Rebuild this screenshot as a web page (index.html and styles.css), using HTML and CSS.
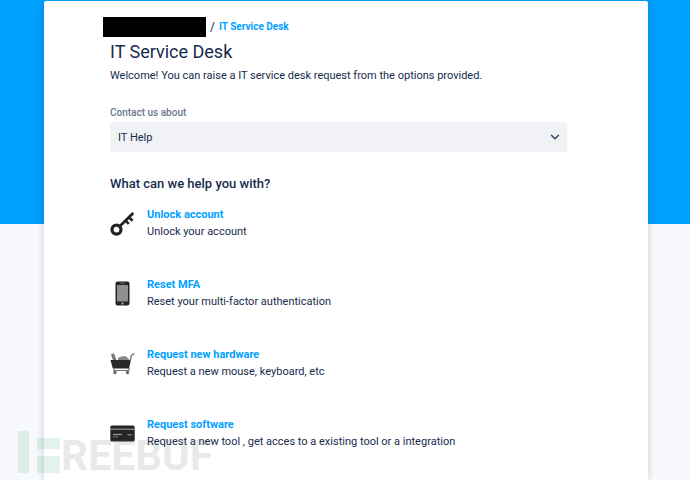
FILE: index.html
```
<!DOCTYPE html>
<html lang="en">
<head>
    <meta charset="UTF-8">
    <meta name="viewport" content="width=device-width, initial-scale=1.0">
    <title>IT Service Desk</title>
    <link rel="stylesheet" href="styles.css">
</head>
<body>
    <main class="card">
        <nav class="breadcrumb">
            <span class="redacted"></span>
            <span class="separator">/</span>
            <a href="#">IT Service Desk</a>
        </nav>
        <h1>IT Service Desk</h1>
        <p class="intro">Welcome! You can raise a IT service desk request from the options provided.</p>

        <form>
            <label for="contact">Contact us about</label>
            <div class="select-box">
                <select name="contact" id="contact">
                    <option>IT Help</option>
                </select>
                <svg class="arrow" width="10" height="6" viewBox="0 0 10 6">
                    <path d="M1.2 1L5 4.7L8.8 1" fill="none" stroke="#344563" stroke-width="1.6"/>
                </svg>
            </div>
        </form>

        <h2>What can we help you with?</h2>
        <ul class="requests">
            <li>
                <svg class="icon" width="25" height="25" viewBox="0 0 25 25">
                    <circle cx="6.5" cy="18.6" r="4.5" fill="none" stroke="#222" stroke-width="3.2"/>
                    <path d="M9.5 15.5L22.5 2.8" fill="none" stroke="#222" stroke-width="2.8" stroke-linecap="round"/>
                    <path d="M15.8 9.8l3 3M19 6.5l3.6 3.2" fill="none" stroke="#222" stroke-width="2.6"/>
                </svg>
                <div>
                    <a href="#">Unlock account</a>
                    <p>Unlock your account</p>
                </div>
            </li>
            <li>
                <svg class="icon" width="25" height="25" viewBox="0 0 25 25">
                    <rect x="5.5" y="0.5" width="14" height="24" rx="2" fill="#252525"/>
                    <rect x="7" y="4" width="11" height="16.5" fill="#8e8e8e"/>
                    <path d="M10.5 2.2h4" stroke="#888" stroke-width="0.8"/>
                    <rect x="11.5" y="21.5" width="2" height="2" rx="0.5" fill="#aaa"/>
                </svg>
                <div>
                    <a href="#">Reset MFA</a>
                    <p>Reset your multi-factor authentication</p>
                </div>
            </li>
            <li>
                <svg class="icon" width="25" height="25" viewBox="0 0 25 25">
                    <path d="M1 3.5l3-1.2l2.5 7H3z" fill="#777"/>
                    <path d="M8 9V6.8L12 5.2h4l3 3V10H8z" fill="#888"/>
                    <path d="M0.5 9h20.5l-2 8.5H2.8z" fill="#282828"/>
                    <path d="M20 10l1.5-5.5q0.6-1.4 3-1.5" fill="none" stroke="#777" stroke-width="1.4"/>
                    <path d="M4 17v2.5h15V17" fill="none" stroke="#777" stroke-width="1.2"/>
                    <circle cx="5" cy="21.5" r="1.7" fill="#666"/>
                    <circle cx="17.5" cy="21.5" r="1.7" fill="#666"/>
                </svg>
                <div>
                    <a href="#">Request new hardware</a>
                    <p>Request a new mouse, keyboard, etc</p>
                </div>
            </li>
            <li>
                <svg class="icon" width="25" height="25" viewBox="0 0 25 25">
                    <rect x="0.3" y="4.5" width="24.4" height="16" rx="1.5" fill="#252525"/>
                    <path d="M0.3 8.2h24.4" stroke="#aaa" stroke-width="1"/>
                    <path d="M3 13.5h9" stroke="#999" stroke-width="1.2"/>
                    <path d="M3 15.8h5" stroke="#777" stroke-width="1"/>
                    <path d="M17.5 13.8h4" stroke="#888" stroke-width="1.4"/>
                </svg>
                <div>
                    <a href="#">Request software</a>
                    <p>Request a new tool , get acces to a existing tool or a integration</p>
                </div>
            </li>
        </ul>
    </main>

    <div class="watermark">
        <svg width="42" height="42" viewBox="0 0 42 42">
            <path d="M0 0h11v42H0zM19 7h23v11H19zM19 25h23v17H19z" fill="#22a06b"/>
        </svg>
        <span>REEBUF</span>
    </div>
</body>
</html>
```

FILE: styles.css
```
* {
    box-sizing: border-box;
}
body {
    font-family: Roboto, "Liberation Sans", sans-serif;
    font-size: 11px;
    line-height: 16px;
    margin: 0;
    color: #172b4d;
    background: linear-gradient(#00a0ff 224px, #f8f9fc 224px);
    min-height: 100vh;
    display: flex;
}
a {
    color: #00a0ff;
    font-weight: 700;
    text-decoration: none;
}
a:hover {
    text-decoration: underline;
}
h1, h2, p {
    margin: 0;
}
.card {
    flex: 1;
    margin: 1px 42px 0 44px;
    padding: 15px 81px 0 66px;
    background-color: white;
    border-radius: 2px 2px 0 0;
    box-shadow: 0 0 8px rgba(9, 30, 66, 0.2);
}
.breadcrumb {
    display: flex;
    align-items: center;
    gap: 4px;
    margin-left: -7px;
    font-size: 10px;
    line-height: 22px;
}
.redacted {
    width: 103px;
    height: 20px;
    background-color: black;
}
.separator {
    font-size: 12px;
}
h1 {
    margin-top: 2px;
    font-size: 18px;
    line-height: 24px;
    font-weight: 400;
}
.intro {
    margin-top: 4px;
}
label {
    display: block;
    margin-top: 21px;
    font-size: 10px;
    font-weight: 500;
    color: #6b778c;
}
.select-box {
    position: relative;
    margin-top: 1px;
}
select {
    appearance: none;
    display: block;
    width: 100%;
    height: 30px;
    padding: 1px 8px 0;
    border: none;
    border-radius: 3px;
    background-color: #f1f2f6;
    color: inherit;
    font: inherit;
}
.arrow {
    position: absolute;
    right: 7px;
    top: 12px;
    pointer-events: none;
}
h2 {
    margin-top: 24px;
    font-size: 13px;
    font-weight: 500;
}
.requests {
    list-style: none;
    margin: 15px 0 0;
    padding: 0;
    display: grid;
    gap: 37px;
}
.requests li {
    display: flex;
    align-items: center;
    gap: 12px;
}
.requests p {
    margin-top: 1px;
}
.requests a {
    display: block;
}
.icon {
    flex: none;
}
.watermark {
    position: absolute;
    left: 18px;
    top: 431px;
    display: flex;
    align-items: flex-end;
    gap: 1px;
    opacity: 0.12;
    pointer-events: none;
}
.watermark span {
    font-family: Roboto, sans-serif;
    font-size: 42px;
    line-height: 34px;
    font-weight: 700;
    color: #555;
}
```
